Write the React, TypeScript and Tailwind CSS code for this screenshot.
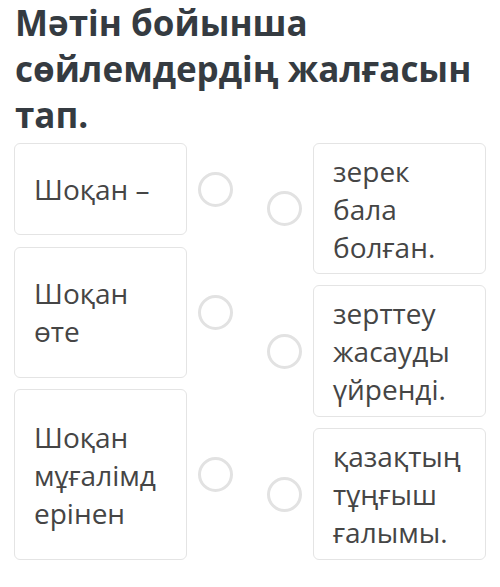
const leftItems = [
  { lines: ['Шоқан –'], h: 'h-[92px]' },
  { lines: ['Шоқан', 'өте'], h: 'h-[131px]' },
  { lines: ['Шоқан', 'мұғалімд', 'ерінен'], h: 'h-[171px]' },
];

const rightItems = [
  { lines: ['зерек', 'бала', 'болған.'], h: 'h-[131px]' },
  { lines: ['зерттеу', 'жасауды', 'үйренді.'], h: 'h-[132px]' },
  { lines: ['қазақтың', 'тұңғыш', 'ғалымы.'], h: 'h-[132px]' },
];

function Radio() {
  return <span className="block w-[35px] h-[35px] rounded-full border-[3px] border-[#e2e2e2] bg-white shrink-0" />;
}

function Card({ lines, h }: { lines: string[]; h: string }) {
  return (
    <div className={`w-[173px] ${h} flex flex-col justify-center px-[19px] bg-white border border-[#e4e4e4] rounded-[6px] text-[28px] leading-[38px] text-[#454545]`}>
      {lines.map((l) => (
        <span key={l} className="block whitespace-nowrap">{l}</span>
      ))}
    </div>
  );
}

export default function App() {
  return (
    <div className="w-[500px] h-[587px] bg-white overflow-hidden" style={{ fontFamily: '"Open Sans", "Noto Sans", sans-serif' }}>
      <h1 className="pl-[15px] text-[35px] leading-[46px] font-bold text-[#353b41]">
        Мәтін бойынша
        <br />
        сөйлемдердің жалғасын
        <br />
        тап.
      </h1>
      <div className="flex mt-[5px] pl-[14px]">
        <div className="flex flex-col gap-[11.5px]">
          {leftItems.map((it, i) => (
            <div key={i} className="flex items-center gap-[11px]">
              <Card {...it} />
              <Radio />
            </div>
          ))}
        </div>
        <div className="flex flex-col gap-[11px] ml-[34px]">
          {rightItems.map((it, i) => (
            <div key={i} className="flex items-center gap-[11px]">
              <Radio />
              <Card {...it} />
            </div>
          ))}
        </div>
      </div>
    </div>
  );
}
